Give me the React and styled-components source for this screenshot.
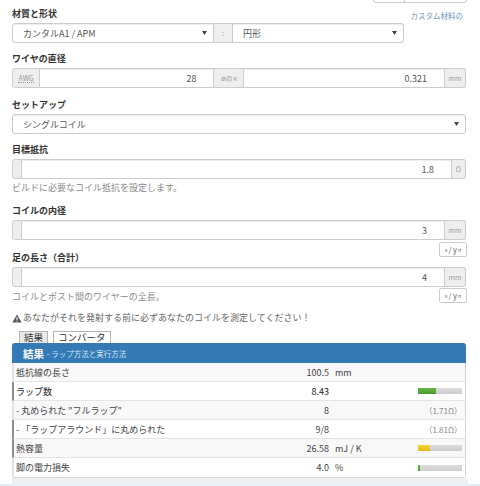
import React from 'react'
import styled, { createGlobalStyle } from 'styled-components'

const GlobalStyle = createGlobalStyle`
  body {
    margin: 0;
    background: #fff;
    font-family: "Noto Sans CJK JP", "Noto Sans", sans-serif;
    color: #333;
    overflow: hidden;
  }
  * { box-sizing: border-box; }
`

const Page = styled.div`
  padding: 0 14px 0 12px;
  white-space: nowrap;
`

const TopBar = styled.div`
  display: flex;
  justify-content: flex-end;
  margin: -19px -1px 0 0;
`

const TopGroup = styled.div`
  display: flex;
  width: 94px;
  height: 22px;
  border: 1px solid #ccc;
  border-radius: 3px;
`

const TopBtn = styled.div`
  width: ${p => p.w}px;
  & + & { border-left: 1px solid #ccc; }
`

const FieldHead = styled.div`
  display: flex;
  justify-content: space-between;
  align-items: ${p => p.align || 'center'};
  height: ${p => p.h || 19}px;
  margin-top: ${p => p.gap || 0}px;
`

const Label = styled.div`
  font-size: 9px;
  font-weight: bold;
  color: #333;
  line-height: 19px;
  align-self: ${p => p.self || 'auto'};
`

const SideLink = styled.div`
  font-size: 7.5px;
  color: #6d95bb;
  margin: 3px 3px 0 0;
`

const Row = styled.div`
  display: flex;
  height: 20px;
`

const Select = styled.div`
  width: ${p => p.w ? `${p.w}px` : 'auto'};
  flex: ${p => p.w ? 'none' : 1};
  height: 100%;
  display: flex;
  align-items: center;
  justify-content: space-between;
  padding: 0 6px 0 10px;
  background: #fff;
  border: 1px solid #ccc;
  border-radius: ${p => p.r || '3px'};
  box-shadow: inset 0 1px 1px rgba(0, 0, 0, 0.075);
  font-size: 9px;
  color: #555;
`

const Addon = styled.div`
  width: ${p => p.w}px;
  flex: none;
  display: flex;
  align-items: center;
  justify-content: center;
  background: #eee;
  border: 1px solid #ccc;
  border-left: ${p => p.first ? '1px solid #ccc' : 'none'};
  border-radius: ${p => p.r || '0'};
  font-size: 7px;
  color: #999;
  sub { font-size: 5px; vertical-align: -2px; margin-left: 1px; }
`

const Abbr = styled.span`
  border-bottom: 1px dotted #999;
  line-height: 8px;
`

const Input = styled.div`
  flex: ${p => p.grow || 1};
  display: flex;
  align-items: center;
  justify-content: flex-end;
  padding-right: 17px;
  background: #fff;
  border: 1px solid #ccc;
  border-left: none;
  box-shadow: inset 0 1px 1px rgba(0, 0, 0, 0.075);
  font-size: 9px;
  color: #555;
`

const Help = styled.div`
  font-size: 9px;
  color: #8a8a8a;
  line-height: 18px;
  margin-top: ${p => p.gap || 0}px;
`

const Unit = styled.div`
  width: 28px;
  height: 15px;
  margin: ${p => p.top || 0}px -1px 0 0;
  border: 1px solid #ccc;
  border-radius: 2px;
  font-size: 7.5px;
  color: #666;
  display: flex;
  align-items: center;
  justify-content: center;
  gap: 1px;
  sup { font-size: 5.5px; vertical-align: 3px; }
`

const Warning = styled.div`
  display: flex;
  align-items: center;
  gap: 1px;
  margin-top: 3px;
  line-height: 18px;
  font-size: 9px;
  color: #666;
`

const Tabs = styled.div`
  display: flex;
  gap: 5px;
  margin: 4px 0 0 7px;
`

const Tab = styled.div`
  height: 12px;
  padding: 0 4px;
  border: 1px solid #b5b5b5;
  border-bottom: none;
  background: ${p => p.active ? '#e9e9e9' : '#fff'};
  font-size: 9.5px;
  line-height: 11px;
  color: #333;
`

const Panel = styled.div`
  border: 1px solid #d5d5d5;
  border-top: none;
  border-radius: 3px;
`

const PanelHead = styled.div`
  height: 20px;
  margin: 0 -1px;
  padding-left: 11px;
  display: flex;
  align-items: center;
  gap: 3px;
  background: #337ab7;
  border-radius: 3px 3px 0 0;
`

const HeadTitle = styled.span`
  font-size: 10.5px;
  font-weight: bold;
  color: #fff;
`

const HeadSub = styled.span`
  font-size: 7.5px;
  color: #d2e6f7;
`

const TRow = styled.div`
  display: grid;
  grid-template-columns: 1fr 60px 82px 48px;
  align-items: center;
  height: 19px;
  margin-left: -1px;
  padding: 0 3px 0 2px;
  border-left: 2px solid ${p => p.mark ? '#8d8d8d' : '#e2e2e2'};
  border-bottom: 1px solid #e4e4e4;
  background: ${p => p.odd ? '#f8f8f8' : '#fff'};
  font-size: 9px;
  color: ${p => p.strong ? '#222' : '#444'};
  &:last-child { border-bottom: none; }
`

const Value = styled.div`
  text-align: right;
  padding-right: 3px;
`

const UnitText = styled.div`
  padding-left: 3px;
`

const Extra = styled.div`
  display: flex;
  justify-content: flex-end;
  font-size: 8px;
  color: #8a8a8a;
`

const Bar = styled.div`
  width: 44px;
  height: 6px;
  background: linear-gradient(#dcdcdc, #cdcdcd);
`

const Fill = styled.div`
  height: 100%;
  background: ${p => p.color};
`

const Footer = styled.div`
  height: 6px;
  margin-right: -2px;
  background: #eef0f1;
`

const Strip = styled.div`
  height: 4px;
  background: #e5f2fa;
`

const Arrow = () => (
  <svg width="5" height="4" viewBox="0 0 5 4">
    <path d="M0 0 H5 L2.5 4 Z" fill="#444" />
  </svg>
)

const WarnIcon = () => (
  <svg width="10" height="9" viewBox="0 0 10 9">
    <path d="M5 0.5 L9.6 8.5 H0.4 Z" fill="#555" />
    <rect x="4.5" y="3" width="1" height="3" fill="#fff" />
    <rect x="4.5" y="6.6" width="1" height="1" fill="#fff" />
  </svg>
)

const XY = ({ top }) => (
  <Unit top={top}><sup>x</sup>/ y <sup>n</sup></Unit>
)

const results = [
  { label: '抵抗線の長さ', value: '100.5', unit: 'mm' },
  { label: 'ラップ数', value: '8.43', bar: { pct: 40, color: 'linear-gradient(#62bb47, #4a9a34)' }, mark: true, strong: true },
  { label: '- 丸められた "フルラップ"', value: '8', extra: '（1.71Ω）' },
  { label: '- 「ラップアラウンド」に丸められた', value: '9/8', extra: '（1.81Ω）', mark: true },
  { label: '熱容量', value: '26.58', unit: 'mJ / K', bar: { pct: 27, color: 'linear-gradient(#f6d23e, #e3b812)' }, mark: true },
  { label: '脚の電力損失', value: '4.0', unit: '%', bar: { pct: 5, color: 'linear-gradient(#62bb47, #4a9a34)' } },
]

export default function App() {
  return (
    <>
      <GlobalStyle />
      <Page>
        <TopBar>
          <TopGroup>
            <TopBtn w={30} />
            <TopBtn w={62} />
          </TopGroup>
        </TopBar>

        <FieldHead gap={1}>
          <Label>材質と形状</Label>
          <SideLink>カスタム材料の</SideLink>
        </FieldHead>
        <Row>
          <Select w={202} r="3px 0 0 3px">カンタルA1 / APM<Arrow /></Select>
          <Addon w={19}>:</Addon>
          <Select w={171} r="0 3px 3px 0" style={{ borderLeft: 'none' }}>円形<Arrow /></Select>
        </Row>

        <FieldHead gap={6}>
          <Label>ワイヤの直径</Label>
        </FieldHead>
        <Row>
          <Addon w={28} first r="3px 0 0 3px"><Abbr>AWG</Abbr></Addon>
          <Input grow={173}>28</Input>
          <Addon w={30}>øの<sub>R</sub></Addon>
          <Input grow={202}>0.321</Input>
          <Addon w={21} r="0 3px 3px 0">mm</Addon>
        </Row>

        <FieldHead gap={7}>
          <Label>セットアップ</Label>
        </FieldHead>
        <Row>
          <Select>シングルコイル<Arrow /></Select>
        </Row>

        <FieldHead gap={6}>
          <Label>目標抵抗</Label>
        </FieldHead>
        <Row>
          <Addon w={10} first r="3px 0 0 3px" />
          <Input>1.8</Input>
          <Addon w={14} r="0 3px 3px 0">Ω</Addon>
        </Row>
        <Help>ビルドに必要なコイル抵抗を設定します。</Help>

        <FieldHead gap={4}>
          <Label>コイルの内径</Label>
        </FieldHead>
        <Row>
          <Addon w={10} first r="3px 0 0 3px" />
          <Input>3</Input>
          <Addon w={21} r="0 3px 3px 0">mm</Addon>
        </Row>

        <FieldHead h={27} align="flex-start">
          <Label self="flex-end">足の長さ（合計）</Label>
          <XY top={2} />
        </FieldHead>
        <Row>
          <Addon w={10} first r="3px 0 0 3px" />
          <Input>4</Input>
          <Addon w={21} r="0 3px 3px 0">mm</Addon>
        </Row>

        <FieldHead h={19} align="flex-start">
          <Help gap={1}>コイルとポスト間のワイヤーの全長。</Help>
          <XY top={1} />
        </FieldHead>

        <Warning>
          <WarnIcon />
          あなたがそれを発射する前に必ずあなたのコイルを測定してください！
        </Warning>

        <Tabs>
          <Tab active>結果</Tab>
          <Tab>コンバータ</Tab>
        </Tabs>

        <Panel>
          <PanelHead>
            <HeadTitle>結果</HeadTitle>
            <HeadSub>- ラップ方法と実行方法</HeadSub>
          </PanelHead>
          {results.map((r, i) => (
            <TRow key={r.label} odd={i % 2 === 0} mark={r.mark} strong={r.strong}>
              <div>{r.label}</div>
              <Value>{r.value}</Value>
              <UnitText>{r.unit}</UnitText>
              <Extra>
                {r.bar
                  ? <Bar><Fill color={r.bar.color} style={{ width: `${r.bar.pct}%` }} /></Bar>
                  : r.extra}
              </Extra>
            </TRow>
          ))}
        </Panel>
        <Footer />
      </Page>
      <Strip />
    </>
  )
}
